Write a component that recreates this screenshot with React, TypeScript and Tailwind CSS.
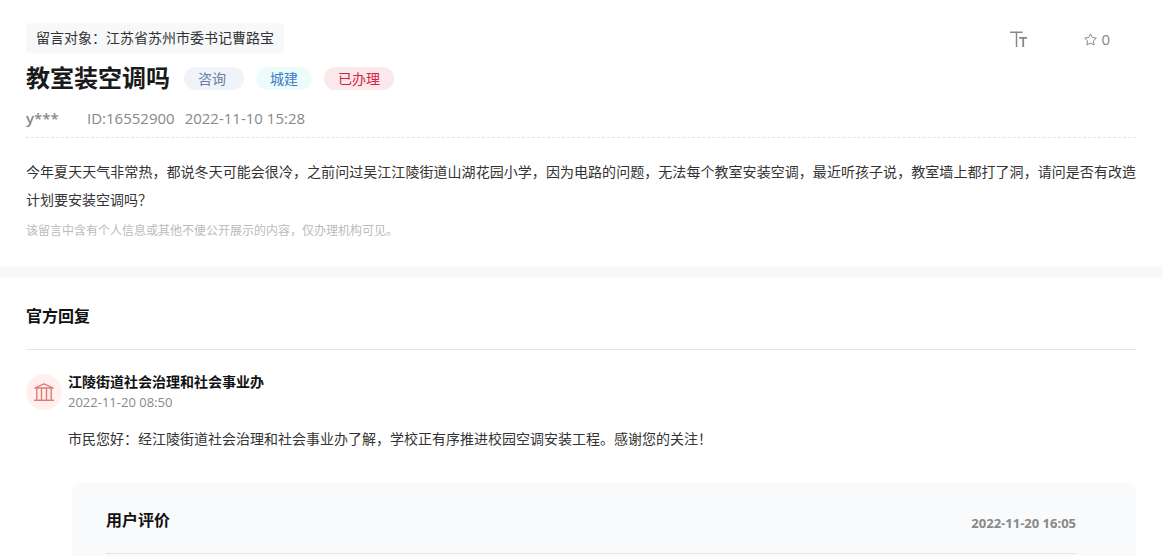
import { ReactNode } from 'react';

interface TagProps {
  className: string;
  children: ReactNode;
}

function Tag({ className, children }: TagProps) {
  return (
    <span className={`rounded-full px-[14px] text-sm leading-[23px] ${className}`}>
      {children}
    </span>
  );
}

function TextSizeIcon() {
  return (
    <svg width="18" height="16" viewBox="0 0 18 16" fill="none" stroke="currentColor" aria-hidden="true">
      <path d="M0 1.2h12.5M6.5 1v15" strokeWidth="1.5" />
      <path d="M9 6.8h8M13.2 6.5V16" strokeWidth="1.8" />
    </svg>
  );
}

function StarIcon() {
  return (
    <svg
      width="13"
      height="13"
      viewBox="0 0 13 13"
      fill="none"
      stroke="currentColor"
      strokeLinejoin="round"
      aria-hidden="true"
    >
      <path d="M6.5 .9l1.8 3.6 4 .6-2.9 2.8.7 4-3.6-1.9-3.6 1.9.7-4L.7 5.1l4-.6z" />
    </svg>
  );
}

function InstitutionIcon() {
  return (
    <svg width="20" height="18" viewBox="0 0 20 18" fill="none" stroke="currentColor" aria-hidden="true">
      <path d="M.8 5L10 .8 19.2 5z" strokeWidth="1.3" strokeLinejoin="round" />
      <path d="M2.8 5.5V17M7.5 5.5V17M12.5 5.5V17M17.2 5.500V17" strokeWidth="1.4" />
      <path d="M0 17.300h20" strokeWidth="1.4" />
    </svg>
  );
}

function Message() {
  return (
    <section className="rounded-b bg-white px-[26px] pt-[23px] pb-[25px]">
      <div className="flex items-start justify-between">
        <p className="rounded-sm bg-[#f7f8fa] px-[10px] text-sm leading-[30px] text-[#333]">
          留言对象：江苏省苏州市委书记曹路宝
        </p>
        <div className="flex h-[30px] items-center gap-14 pt-0.5 pr-[26px] text-[#888]">
          <button type="button" aria-label="字体大小" className="cursor-pointer">
            <TextSizeIcon />
          </button>
          <button type="button" aria-label="收藏" className="flex cursor-pointer items-center gap-1 text-[15px]">
            <StarIcon />
            <span>0</span>
          </button>
        </div>
      </div>

      <div className="flex items-center gap-3 pt-[5px]">
        <h1 className="text-2xl leading-[40px] font-bold text-[#1a1a1a]">教室装空调吗</h1>
        <div className="flex gap-3 pl-0.5">
          <Tag className="bg-[#f0f4fa] pr-[18px] text-[#6580a0]">咨询</Tag>
          <Tag className="bg-[#ecfcfa] text-[#3a78c8]">城建</Tag>
          <Tag className="bg-[#fae8ea] text-[#d9213f]">已办理</Tag>
        </div>
      </div>

      <div className="flex border-b border-dashed border-[#e4e4e4] pt-1.5 pb-[5px] text-[15px] leading-7 text-[#888]">
        <span className="w-[61px] font-semibold">y***</span>
        <span>ID:16552900</span>
        <time className="ml-2.5">2022-11-10 15:28</time>
      </div>

      <p className="mt-5 text-justify text-sm leading-7 text-[#333]">
        今年夏天天气非常热，都说冬天可能会很冷，之前问过吴江江陵街道山湖花园小学，因为电路的问题，无法每个教室安装空调，最近听孩子说，教室墙上都打了洞，请问是否有改造计划要安装空调吗？
      </p>
      <p className="mt-1.5 text-xs leading-[22px] text-[#bbb]">
        该留言中含有个人信息或其他不便公开展示的内容，仅办理机构可见。
      </p>
    </section>
  );
}

function Rating() {
  return (
    <div className="mt-[30px] ml-[46px] rounded-t-lg bg-[#f9fafc] pr-[60px] pb-0.5 pl-[34px]">
      <div className="flex items-center justify-between border-b border-[#e3e5e8] pt-5 pb-4">
        <h3 className="text-base leading-[34px] font-bold text-[#111]">用户评价</h3>
        <time className="pt-2 text-[13px] font-bold text-[#888]">2022-11-20 16:05</time>
      </div>
    </div>
  );
}

function Reply() {
  return (
    <section className="rounded-t bg-white px-[26px]">
      <h2 className="border-b border-[#e5e5e5] pt-6 pb-[18px] text-base leading-[30px] font-bold text-[#111]">
        官方回复
      </h2>
      <div className="flex gap-1.5 pt-6">
        <div className="flex size-9 shrink-0 items-center justify-center rounded-full bg-[#ffefee] text-[#e07a72]">
          <InstitutionIcon />
        </div>
        <div>
          <p className="text-sm leading-4 font-bold text-[#111]">江陵街道社会治理和社会事业办</p>
          <time className="block pt-[3px] text-[13px] leading-[18px] text-[#888]">2022-11-20 08:50</time>
          <p className="mt-[14px] text-sm leading-7 text-[#333]">
            市民您好：经江陵街道社会治理和社会事业办了解，学校正有序推进校园空调安装工程。感谢您的关注！
          </p>
        </div>
      </div>
      <Rating />
    </section>
  );
}

export default function App() {
  return (
    <main lang="zh-CN" className="bg-[#f7f8fa] font-['Open_Sans','Noto_Sans_CJK_SC',sans-serif]">
      <Message />
      <div className="h-2.5" />
      <Reply />
    </main>
  );
}
